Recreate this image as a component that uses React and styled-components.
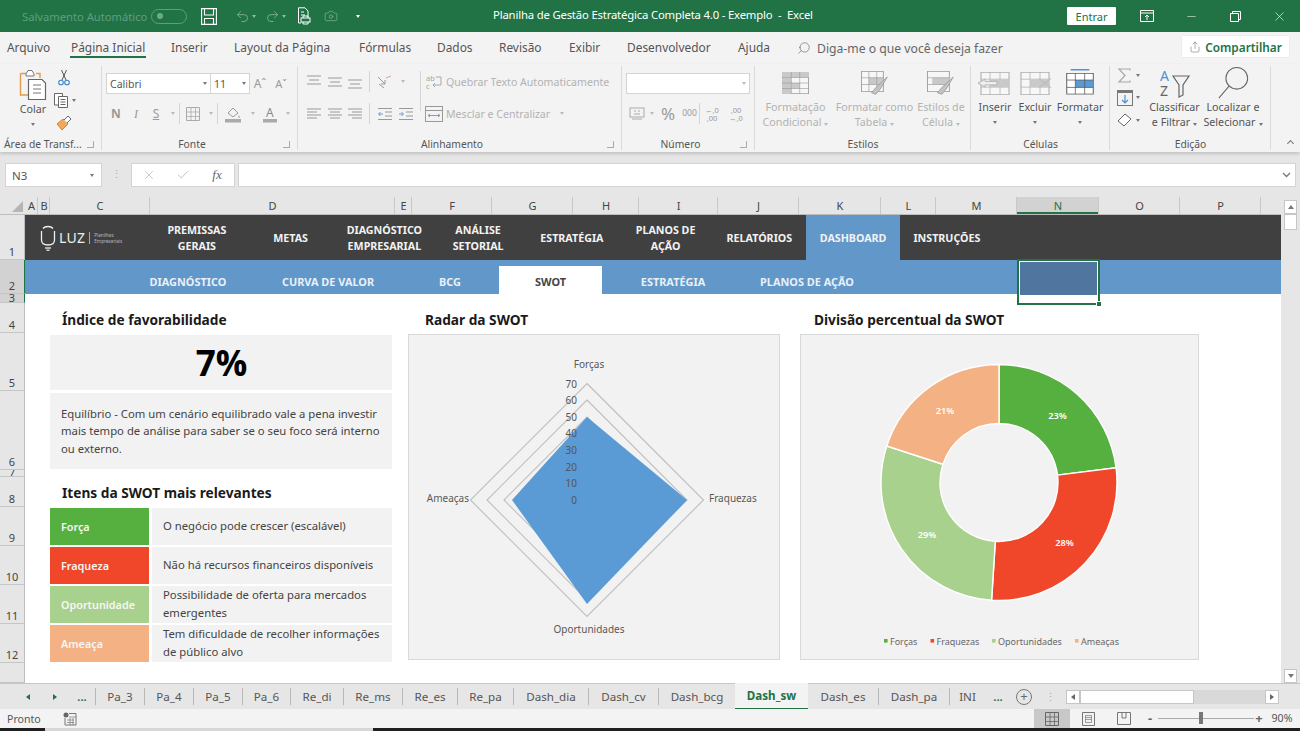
import React from "react";
import styled, { createGlobalStyle } from "styled-components";
import { Undo2, Redo2, Search, X, Minus, Check, Camera, Share } from "lucide-react";

const Global = createGlobalStyle`
  html, body { margin: 0; padding: 0; background: #e6e6e6; }
  * { box-sizing: border-box; }
`;
const UI = `"Noto Sans", "Open Sans", sans-serif`;

const Page = styled.div`
  width: 1300px; height: 731px; overflow: hidden; display: flex; flex-direction: column;
  font-family: ${UI}; color: #444; background: #e6e6e6; position: relative;
`;
/* ---------- title bar ---------- */
const TitleBar = styled.div`
  height: 32px; flex: none; background: #217346; display: flex; align-items: center; color: #fff; font-size: 11.3px;
`;
const AutoSave = styled.span`margin-left: 22px; width: 129px; color: #5f9f7d; font-size: 11.2px; white-space: nowrap;`;
const Toggle = styled.span`
  width: 36px; height: 15px; border: 1px solid #5f9f7d; border-radius: 8px; display: flex; align-items: center; padding-left: 5px;
  &::before { content: ""; width: 6px; height: 6px; border-radius: 50%; background: #6fa98a; }
`;
const QuickSlot = styled.span`
  width: ${p => p.$w}px; flex: none; display: flex; justify-content: center; align-items: center; gap: 2px;
  opacity: ${p => p.$dim ? .5 : 1}; color: #fff;
`;
const DocTitle = styled.span`position: absolute; left: 493px; top: 7px; white-space: pre; letter-spacing: -.015em;`;
const TitleRight = styled.div`margin-left: auto; margin-right: -1px; display: flex; align-items: center;`;
const Entrar = styled.span`
  width: 49px; height: 18px; background: #fff; color: #217346; display: flex; align-items: center; justify-content: center; font-size: 11px; margin-right: 9px; border-radius: 1px;
`;
const WinBtn = styled.span`width: 44px; display: flex; justify-content: center; align-items: center;`;
/* ---------- ribbon tabs ---------- */
const TabBar = styled.div`height: 32px; flex: none; background: #f3f3f3; display: flex; align-items: center; font-size: 11.9px; color: #555; position: relative;`;
const RTab = styled.span`
  width: ${p => p.$w}px; flex: none; height: 32px; line-height: 30px; white-space: nowrap; position: relative;
  ${p => p.$on && `&::after { content: ""; position: absolute; left: -1px; width: 76px; bottom: 6px; height: 2px; background: #217346; }`}
`;
const Tell = styled.span`display: flex; align-items: center; gap: 6px; color: #666; font-size: 12.2px;`;
const Share2 = styled.span`
  position: absolute; right: 11px; top: 4px; width: 107px; height: 21px; background: #fff; color: #217346; font-weight: 600;
  font-size: 11.8px; display: flex; align-items: center; justify-content: center; gap: 4px; box-shadow: 0 0 1px #ccc;
`;
/* ---------- ribbon ---------- */
const Ribbon = styled.div`height: 88px; flex: none; background: #f3f3f3; display: flex; box-shadow: 0 2px 3px #c4c4c4; position: relative; z-index: 1;`;
const Group = styled.div`width: ${p => p.$w}px; flex: none; display: flex; flex-direction: column; position: relative; ${p => p.$end ? "" : "&::after { content: ''; position: absolute; right: 0; top: 2px; bottom: 2px; width: 1px; background: #dadada; }"}`;
const GroupBody = styled.div`flex: 1; min-height: 0; display: flex; padding-left: ${p => p.$pl || 0}px; padding-top: ${p => p.$pt || 0}px;`;
const GroupLabel = styled.div`
  height: 15px; flex: none; font-size: 10.3px; color: #555; text-align: ${p => p.$left ? "left" : "center"}; line-height: 14px; position: relative; white-space: nowrap;
  padding-left: ${p => p.$left ? 4 : 0}px; padding-right: ${p => p.$launcher && !p.$left ? 16 : 0}px;
  ${p => p.$launcher && `&::after { content: ""; position: absolute; right: 8px; top: 4px; width: 6px; height: 6px; border-left: 1px solid #aaa; border-bottom: 1px solid #aaa; transform: scaleX(-1); }`}
`;
const Col = styled.div`display: flex; flex-direction: column; width: ${p => p.$w ? p.$w + "px" : "auto"}; flex: none; align-items: ${p => p.$align || "stretch"};`;
const Row = styled.div`display: flex; align-items: center; height: ${p => p.$h || 21}px; margin-top: ${p => p.$mt || 0}px; flex: none;`;
const Cell = styled.span`
  width: ${p => p.$w}px; flex: none; display: flex; align-items: center; justify-content: center; height: 100%;
  color: ${p => p.$c || "#9a9a9a"}; font-size: ${p => p.$fs || 11}px; font-weight: ${p => p.$fw || 400}; line-height: 1;
  margin-left: ${p => p.$ml || 0}px; padding-right: ${p => p.$pr || 0}px;
  ${p => p.$sep && "border-right: 1px solid #d4d4d4;"}
  ${p => p.$stack && "flex-direction: column; line-height: 8px;"}
`;
const TallSep = styled.span`width: ${p => p.$w}px; height: 40px; align-self: flex-start; flex: none; border-right: 1px solid #d4d4d4;`;
const Sel = styled.span`
  width: ${p => p.$w}px; height: 21px; flex: none; background: #fff; border: 1px solid #d4d4d4; display: flex; align-items: center; justify-content: space-between;
  padding: 0 3px; font-size: 10.5px; color: #555; margin-left: ${p => p.$ml || 0}px;
`;
const Caret = styled.span`width: 0; height: 0; flex: none; border-left: 2.5px solid transparent; border-right: 2.5px solid transparent; border-top: 3px solid ${p => p.$c || "#777"}; display: inline-block; margin-left: ${p => p.$ml || 0}px;`;
const WrapText = styled.span`color: #b2b2b2; font-size: 10.6px; margin-left: 2px; white-space: nowrap;`;
const StackBtn = styled.div`
  width: ${p => p.$w}px; flex: none; display: flex; flex-direction: column; align-items: center; color: ${p => p.$c || "#b2b2b2"}; font-size: 10.7px; line-height: 15px; text-align: center; white-space: nowrap;
`;
const IconBox = styled.div`height: ${p => p.$h || 37}px; flex: none; display: flex; align-items: ${p => p.$a || "center"}; justify-content: center;`;
const Collapse = styled.span`position: absolute; right: 7px; bottom: 6px; width: 5px; height: 5px; border-left: 1.3px solid #777; border-top: 1.3px solid #777; transform: rotate(45deg);`;
/* ---------- formula bar ---------- */
const FormulaRow = styled.div`height: 45px; flex: none; display: flex; align-items: flex-start; padding-top: 11px; padding-left: 5px; background: #e6e6e6;`;
const NameBox = styled.div`width: 97px; height: 24px; background: #fff; border: 1px solid #d4d4d4; display: flex; align-items: center; justify-content: space-between; padding: 0 7px 0 6px; font-size: 11.5px; color: #555;`;
const Dots = styled.div`width: 29px; text-align: center; color: #aaa; font-size: 11px; line-height: 22px; flex: none;`;
const FxBox = styled.div`width: 104px; height: 24px; background: #fff; border: 1px solid #d4d4d4; display: flex; align-items: center; flex: none;`;
const FxCell = styled.span`width: 34.6px; display: flex; justify-content: center; color: #bbb; &:last-child { color: #666; font-family: "Liberation Serif", serif; font-style: italic; font-size: 13px; }`;
const Input = styled.div`width: 1058px; height: 24px; margin-left: 3px; background: #fff; border: 1px solid #d4d4d4; display: flex; align-items: center; justify-content: flex-end; padding-right: 4px; color: #777; font-size: 9px;`;
/* ---------- column headers ---------- */
const ColHeads = styled.div`height: 18px; flex: none; display: flex; background: #e6e6e6; border-bottom: 1px solid #bdbdbd;`;
const Corner = styled.div`width: 25px; flex: none; position: relative; overflow: hidden; &::after { content: ""; position: absolute; right: 2px; bottom: 2px; border-left: 11px solid transparent; border-bottom: 11px solid #b5b5b5; }`;
const ColHead = styled.div`
  width: ${p => p.$w}px; flex: none; text-align: center; font-size: 11px; line-height: 18px; padding-left: 1px; color: ${p => p.$on ? "#217346" : "#444"};
  border-right: 1px solid #c9c9c9; background: ${p => p.$on ? "#d2d2d2" : "transparent"}; ${p => p.$on && "box-shadow: inset 0 -2px 0 #217346;"}
`;
/* ---------- sheet ---------- */
const Work = styled.div`height: 468px; flex: none; display: flex;`;
const RowHeads = styled.div`width: 25px; flex: none; display: flex; flex-direction: column; background: #e6e6e6;`;
const RowHead = styled.div`
  height: ${p => p.$h}px; flex: none; display: flex; justify-content: center; align-items: flex-end; font-size: 11px; line-height: ${p => p.$h < 12 ? p.$h + "px" : "15px"}; overflow: hidden; color: #444;
  border-bottom: 1px solid #c6c6c6; background: ${p => p.$on ? "#d2d2d2" : "transparent"}; border-right: 1px solid ${p => p.$on ? "#217346" : "#bdbdbd"};
`;
const Sheet = styled.div`width: 1256px; flex: none; background: #fff; display: flex; flex-direction: column; position: relative;`;
const MainNav = styled.div`height: 45px; flex: none; background: #404040; display: flex; align-items: stretch;`;
const Logo = styled.div`width: 125px; flex: none; display: flex; align-items: center; padding-left: 15px; color: #eee;`;
const LuzWord = styled.span`font-size: 14px; margin-left: 3px; letter-spacing: .02em;`;
const LuzSub = styled.span`font-size: 4.6px; line-height: 6px; border-left: 1px solid #aaa; margin-left: 4px; padding-left: 4px; color: #bbb;`;
const NavItem = styled.div`
  width: 93.75px; flex: none; display: flex; align-items: center; justify-content: center; text-align: center; color: #f2f2f2;
  font-weight: 700; font-size: 10.7px; line-height: 16px; background: ${p => p.$on ? "#6297c9" : "transparent"};
`;
const SubNav = styled.div`height: 34px; flex: none; background: #6297c9; display: flex; align-items: flex-end; padding-left: 93px;`;
const SubItem = styled.div`
  width: ${p => p.$w}px; height: 28px; flex: none; display: flex; align-items: center; justify-content: center; font-weight: 700; font-size: 10.9px; padding-top: 2px;
  color: ${p => p.$on ? "#444" : "#e9f0f7"}; background: ${p => p.$on ? "#fff" : "transparent"}; margin-left: ${p => p.$ml || 0}px;
`;
const Selection = styled.div`
  position: absolute; left: 992px; top: 44px; width: 83px; height: 46px; border: 2px solid #217346; outline: 0;
  &::before { content: ""; position: absolute; inset: 0; height: 33px; background: #50769f; border: 1px solid #fff; border-bottom: 0; }
`;
const Handle = styled.span`position: absolute; right: -4px; bottom: -4px; width: 6px; height: 6px; background: #217346; border: 1px solid #fff;`;
const Dash = styled.div`flex: 1; display: flex; padding: 9px 0 0 25px;`;
const LeftCol = styled.div`width: 342px; flex: none; display: flex; flex-direction: column;`;
const MidCol = styled.div`width: 372px; margin-left: 16px; flex: none; display: flex; flex-direction: column;`;
const RightCol = styled.div`width: 399px; margin-left: 20px; flex: none; display: flex; flex-direction: column;`;
const Heading = styled.div`
  height: ${p => p.$h}px; flex: none; font-weight: 700; font-size: 13.7px; color: #1a1a1a; padding-left: ${p => p.$pl}px; line-height: 33px; white-space: nowrap; padding-top: ${p => p.$pt || 0}px;
`;
const Big = styled.div`height: 55px; background: #f2f2f2; flex: none; font-size: 35px; font-weight: 700; color: #000; display: flex; align-items: center; justify-content: center; font-family: "Open Sans", sans-serif; padding-left: 1px;`;
const Para = styled.div`height: 76px; margin-top: 3px; background: #f2f2f2; flex: none; padding: 0 8px 0 11px; font-size: 11.3px; line-height: 17.3px; color: #444; display: flex; align-items: center;`;
const SwotList = styled.div`display: flex; flex-direction: column; gap: 2px;`;
const SwotRow = styled.div`display: flex; height: 37px; gap: 3px;`;
const SwotTag = styled.div`width: 99px; flex: none; background: ${p => p.$c}; color: #f6f6f6; font-weight: 600; font-size: 10.8px; display: flex; align-items: center; padding-left: 11px;`;
const SwotDesc = styled.div`flex: 1; background: #f2f2f2; font-size: 11.3px; line-height: 17.3px; color: #444; display: flex; align-items: center; padding: 0 0 2px 11px;`;
const ChartBox = styled.div`height: 326px; flex: none; background: #f2f2f2; border: 1px solid #d9d9d9; position: relative; overflow: hidden;`;
const ChartSvg = styled.svg`display: block; width: 100%; height: 100%; font-family: ${UI};`;
const VScroll = styled.div`width: 19px; flex: none; margin-top: -17px; background: #e6e6e6; display: flex; flex-direction: column; align-items: center; position: relative; z-index: 1;`;
const VBtn = styled.div`width: 13px; height: 14px; background: #fff; border: 1px solid #c6c6c6; display: flex; align-items: center; justify-content: center; flex: none; margin-top: ${p => p.$top ? 2 : 0}px;`;
const VThumb = styled.div`width: 13px; height: 16px; background: #fff; border: 1px solid #c6c6c6; flex: none;`;
const Tri = styled.span`width: 0; height: 0; border-left: 3px solid transparent; border-right: 3px solid transparent; ${p => p.$up ? "border-bottom: 4px solid #777;" : "border-top: 4px solid #777;"}`;
const VGap = styled.div`flex: 1;`;
/* ---------- sheet tabs ---------- */
const TabsRow = styled.div`height: 26px; flex: none; display: flex; align-items: stretch; background: #e6e6e6; border-top: 1px solid #c6c6c6; font-size: 11.6px; color: #555;`;
const TabNav = styled.div`width: 95px; flex: none; display: flex; align-items: center; padding-left: 14px; color: #217346;`;
const NavCell = styled.span`width: ${p => p.$w}px; flex: none; display: flex; justify-content: center; font-size: 11px; font-weight: 700; align-self: center; color: #217346;`;
const SheetTab = styled.div`
  width: ${p => p.$w}px; flex: none; display: flex; align-items: center; justify-content: center; white-space: nowrap;
  border-left: ${p => p.$on ? "0" : "1px solid #b8b8b8"}; margin: ${p => p.$on ? "-1px 0 1px" : "4px 0 4px"};
  ${p => p.$on && "background: #f3f3f3; color: #217346; font-weight: 700; border-bottom: 2px solid #217346; height: 27px;"}
  ${p => p.$noLine && "border-left: 0;"}
`;
const AddBtn = styled.span`width: 16px; height: 16px; border: 1px solid #777; border-radius: 50%; display: flex; align-items: center; justify-content: center; color: #666; font-size: 13px; line-height: 1;`;
const HScroll = styled.div`width: 213px; height: 14px; margin-left: 3px; display: flex; background: #d9d9d9; align-self: center;`;
const HBtn = styled.div`width: 14px; flex: none; background: #fff; border: 1px solid #c6c6c6; display: flex; align-items: center; justify-content: center;`;
const HThumb = styled.div`width: 114px; flex: none; background: #fff; border: 1px solid #c6c6c6;`;
const HTri = styled.span`width: 0; height: 0; border-top: 3px solid transparent; border-bottom: 3px solid transparent; ${p => p.$l ? `border-right: 4px solid ${p.$c || "#666"};` : `border-left: 4px solid ${p.$c || "#666"};`}`;
/* ---------- status ---------- */
const Status = styled.div`height: 19px; flex: none; display: flex; align-items: center; background: #f3f3f3; font-size: 10.6px; color: #555; padding-left: 7px;`;
const StatusIcon = styled.svg`margin-left: 22px;`;
const StatusRight = styled.div`margin-left: auto; display: flex; align-items: center; height: 100%;`;
const ViewBtn = styled.span`width: 36px; height: 100%; display: flex; align-items: center; justify-content: center; background: ${p => p.$on ? "#c8c8c8" : "transparent"};`;
const Slider = styled.div`width: 96px; height: 1px; background: #aaa; position: relative;`;
const SliderThumb = styled.span`position: absolute; left: 41px; top: -6px; width: 4px; height: 12px; background: #777;`;
const Strip = styled.div`height: 3px; flex: none; display: flex; background: #1f1f1f;`;
const StripLight = styled.div`width: 328px; margin-left: 45px; background: #d8d8d8;`;
const Flip = styled.span`display: flex; transform: scaleX(-1);`;

/* ---------- icon drawings ---------- */
const TableIco = ({ w = 27, h = 22, fill = [], accent = "#c9c9c9", stroke = "#999" }) => (
  <svg width={w} height={h} viewBox="0 0 32 32" preserveAspectRatio="none">
    <rect x=".5" y=".5" width="31" height="31" fill="#f7f7f7" stroke={stroke} />
    {fill.map((f, i) => <rect key={i} x={f[0]} y={f[1]} width={f[2]} height={f[3]} fill={accent} />)}
    {[8, 16, 24].map(v => <path key={v} d={`M0 ${v}H32`} stroke={stroke} strokeWidth=".8" />)}
    {[11, 21].map(v => <path key={v} d={`M${v} 0V32`} stroke={stroke} strokeWidth=".8" />)}
  </svg>
);
const Brush = () => <path d="M30 8 L22 24 L17 31 L12 29 L17 22 Z" fill="#c4c4c4" stroke="#999" strokeWidth="1" />;
const AlignIco = ({ rows, color = "#999" }) => (
  <svg width="16" height="14" viewBox="0 0 16 14" stroke={color} strokeWidth="1">
    {rows.map((r, i) => <path key={i} d={`M${r[0]} ${r[2]}H${r[1]}`} />)}
  </svg>
);
const Paste = () => (
  <svg width="30" height="34" viewBox="0 0 30 34">
    <path d="M2.5 5.5H8M18 5.5H22V10M2.5 5.5V27H10" fill="none" stroke="#e29a4c" strokeWidth="1.4" />
    <path d="M8 6L10 2.5H14L16 6V8H8Z" fill="#fff" stroke="#777" strokeWidth="1" />
    <path d="M10.5 11.5H24L27.5 15V31.5H10.5Z" fill="#fff" stroke="#666" strokeWidth="1.2" />
    <path d="M15 17H23M15 21H23M15 25H23" stroke="#777" />
  </svg>
);
const CutIco = () => (
  <svg width="12" height="17" viewBox="0 0 12 17" fill="none">
    <path d="M3.5 1L8 11M8.5 1L4 11" stroke="#555" strokeWidth="1" />
    <circle cx="3" cy="13.5" r="2.3" stroke="#3f86c8" strokeWidth="1.1" />
    <circle cx="9" cy="13.5" r="2.3" stroke="#3f86c8" strokeWidth="1.1" />
  </svg>
);
const CopyIco = () => (
  <svg width="16" height="17" viewBox="0 0 16 17" fill="#fff" stroke="#666">
    <path d="M1.5 1.5H9.5V13H1.5Z" /><path d="M5.5 4.5H14.5V15.5H5.5Z" /><path d="M7.5 7.5H12.5M7.5 10H12.5M7.5 12.5H12.5" />
  </svg>
);
const FormatPainter = () => (
  <svg width="16" height="17" viewBox="0 0 16 17">
    <path d="M1 10L7 5L12 10L6 16Z" fill="#f0a95c" stroke="#d08838" />
    <path d="M8 6L12 2L15 5L11 9" fill="#fff" stroke="#666" />
  </svg>
);
const Bulb = () => (
  <svg width="16" height="26" viewBox="0 0 16 26" fill="none" stroke="#eee" strokeWidth="1.3">
    <path d="M3 3.5C5 .8 11 .8 13 3.5" /><path d="M1.5 6V15C1.5 18.5 4 20 8 20S14.5 18.5 14.5 15V6" />
    <path d="M5 23H11" /><path d="M6.5 25.2H9.5" />
  </svg>
);
const QSave = () => (
  <svg width="16" height="17" viewBox="0 0 16 17" fill="none" stroke="#fff" strokeWidth="1.1">
    <path d="M.6.6H15.4V16.4H.6Z" /><path d="M3.5.6V7H12.5V.6" /><path d="M3.5 16.4V10.5H12.5V16.4" />
  </svg>
);
const QDoc = () => (
  <svg width="14" height="18" viewBox="0 0 14 18" fill="none" stroke="#fff" strokeWidth="1">
    <path d="M1.5.8H8L11 4V10" /><path d="M1.5.8V16H4" /><path d="M4 8H8M4 5H7" /><rect x="4" y="11" width="9" height="4" /><path d="M6 11V9H11V11M6 15V17H11V15" />
  </svg>
);
const TinyTable = ({ w = 14, color = "#aaa" }) => (
  <svg width={w} height={w} viewBox="0 0 14 14" fill="none" stroke={color}>
    <path d="M.5.5H13.5V13.5H.5Z" /><path d="M.5 5H13.5M.5 9.5H13.5M5 .5V13.5M9.5 .5V13.5" strokeWidth=".8" />
  </svg>
);
const WrapAb = () => <svg width="18" height="18" viewBox="0 0 18 18" fontFamily="Noto Sans" fontSize="7.5" fill="#a8a8a8"><text x="1" y="7.5">ab</text><text x="1" y="16">c</text><path d="M11 4H16V12H8M10 10L8 12L10 14" fill="none" stroke="#a8a8a8" /></svg>;
const MergeIco = () => <svg width="18" height="16" viewBox="0 0 18 16" fill="none" stroke="#999"><rect x=".5" y=".5" width="17" height="15" /><path d="M.5 4.5H17.5M3 9.5H15M5 8L3 9.5L5 11M13 8L15 9.5L13 11" /></svg>;
const Orient = () => <svg width="16" height="16" viewBox="0 0 16 16" fill="none" stroke="#999"><path d="M2 3L9 10M9 10V6M9 10H5" /><path d="M10 4L15 2" stroke="#c77" strokeWidth=".7" /><path d="M3 10L8 14" /></svg>;
const IndentIco = ({ right }) => (
  <svg width="16" height="14" viewBox="0 0 16 14" fill="none" stroke="#999">
    <path d="M1 1.5H15M1 12.5H15M8 5H15M8 9H15" />
    <path d={right ? "M1 7H5M3.5 5L5.5 7L3.5 9" : "M6 7H2M3.5 5L1.5 7L3.5 9"} stroke="#6d9ccb" />
  </svg>
);
const CurrencyIco = () => <svg width="16" height="16" viewBox="0 0 16 16" fill="none" stroke="#aaa"><rect x="1" y="2" width="14" height="9" /><path d="M3 13H13M5 5H7M9 5H11M5 8H11" /></svg>;
const PaintBucket = () => <svg width="18" height="18" viewBox="0 0 18 18"><path d="M4 8L9 3L14 8L9 12Z" fill="none" stroke="#999" /><path d="M15 10C16 12 16 13 15 13S14 12 15 10Z" fill="#aaa" /><rect x="1" y="14" width="16" height="3.5" fill="#aaa" /></svg>;
const FontColor = () => <svg width="16" height="18" viewBox="0 0 16 18" fontFamily="Noto Sans" fontSize="12" fill="#8a8a8a"><text x="4" y="12">A</text><rect x="1" y="14" width="14" height="3.5" fill="#aaa" /></svg>;
const Sigma = () => <svg width="15" height="15" viewBox="0 0 15 15" fill="none" stroke="#a8a8a8" strokeWidth="1.2"><path d="M13 2.5V1H2L8 7.5L2 14H13V12.5" /></svg>;
const FillDown = () => <svg width="16" height="16" viewBox="0 0 16 16" fill="none"><rect x=".5" y=".5" width="15" height="15" stroke="#777" /><rect x="0" y="0" width="16" height="3" fill="#777" /><path d="M8 5V13M5 10L8 13L11 10" stroke="#4d92d4" strokeWidth="1.2" /></svg>;
const Eraser = () => <svg width="15" height="15" viewBox="0 0 15 15" fill="#fff" stroke="#666"><path d="M1 8L8 1L14 6L7 13Z" /></svg>;
const SortFilter = () => (
  <svg width="40" height="36" viewBox="0 0 40 36" fontFamily="Noto Sans" fontSize="14">
    <text x="5" y="16" fill="#4d92d4">A</text><text x="5" y="31" fill="#666">Z</text>
    <path d="M18 11H34L28 20V30L24 32V20Z" fill="none" stroke="#666" strokeWidth="1.2" />
  </svg>
);
const Magnifier = () => (
  <svg width="34" height="34" viewBox="0 0 34 36" fill="none" stroke="#666" strokeWidth="1.1">
    <circle cx="21" cy="13" r="11.5" /><path d="M13 21L2 34" />
  </svg>
);
const FormatCells = () => (
  <svg width="28" height="28" viewBox="0 0 30 38" preserveAspectRatio="none">
    <path d="M5 1H25" stroke="#4d92d4" strokeWidth="2" />
    <rect x=".8" y="6" width="28.4" height="28" fill="#fff" stroke="#555" />
    <rect x="10" y="15" width="19" height="10" fill="#5b9bd5" />
    <path d="M1 15H29M1 25H29M10 6V34M20 6V34" stroke="#555" strokeWidth=".9" />
  </svg>
);
const InsertCells = ({ del }) => (
  <svg width="36" height="23" viewBox="0 0 36 32" preserveAspectRatio="none">
    <rect x="4" y=".5" width="28" height="31" fill="#f7f7f7" stroke="#aaa" />
    <path d="M4 10H32M4 21H32M13 0V32M23 0V32" stroke="#aaa" strokeWidth=".8" />
    <rect x="13" y="10" width="19" height="11" fill="#c9c9c9" />
    {del
      ? <path d="M22 9L34 22M34 9L22 22" stroke="#bbb" strokeWidth="1.2" fill="none" />
      : <path d="M1 15.5L8 10V13H20V18H8V21Z" fill="#eee" stroke="#aaa" />}
  </svg>
);

/* ---------- charts ---------- */
const RADAR = { cx: 178, cy: 165, r: 116.5 };
const diamond = (t, r, b, l) => {
  const { cx, cy } = RADAR;
  return `${cx},${cy - t} ${cx + r},${cy} ${cx},${cy + b} ${cx - l},${cy}`;
};
const RadarChart = () => (
  <ChartSvg viewBox="0 0 370 324">
    <polygon points={diamond(116.5, 116.5, 116.5, 116.5)} fill="none" stroke="#bfbfbf" strokeWidth="1.1" />
    <polygon points={diamond(100, 100, 100, 100)} fill="none" stroke="#bfbfbf" strokeWidth="1.1" />
    <polygon points={diamond(83, 83, 83, 83)} fill="none" stroke="#bfbfbf" strokeWidth="1.1" />
    <polygon points={diamond(83, 100, 104, 75)} fill="#5b9bd5" />
    <g fontSize="10" fill="#555" textAnchor="end">
      {[70, 60, 50, 40, 30, 20, 10, 0].map((v, i) => <text key={v} x="168" y={52.5 + i * 16.6}>{v}</text>)}
    </g>
    <g fontSize="10" fill="#595959">
      <text x="180" y="33" textAnchor="middle">Forças</text>
      <text x="300" y="167">Fraquezas</text>
      <text x="180" y="298" textAnchor="middle">Oportunidades</text>
      <text x="60" y="167" textAnchor="end">Ameaças</text>
    </g>
  </ChartSvg>
);
const polar = (cx, cy, r, deg) => {
  const a = (deg - 90) * Math.PI / 180;
  return [cx + r * Math.cos(a), cy + r * Math.sin(a)];
};
const arc = (cx, cy, R, r, a0, a1) => {
  const [x0, y0] = polar(cx, cy, R, a0), [x1, y1] = polar(cx, cy, R, a1);
  const [x2, y2] = polar(cx, cy, r, a1), [x3, y3] = polar(cx, cy, r, a0);
  const large = a1 - a0 > 180 ? 1 : 0;
  return `M${x0} ${y0}A${R} ${R} 0 ${large} 1 ${x1} ${y1}L${x2} ${y2}A${r} ${r} 0 ${large} 0 ${x3} ${y3}Z`;
};
const SEG = [
  { a: [0, 82.8], c: "#56b040", t: "23%", x: 256.5, y: 81 },
  { a: [82.8, 183.6], c: "#f0472b", t: "28%", x: 263.5, y: 208 },
  { a: [183.6, 288], c: "#a9d18e", t: "29%", x: 126, y: 200 },
  { a: [288, 360], c: "#f4b183", t: "21%", x: 144, y: 76 },
];
const LEG = [
  { x: 84, c: "#56b040", t: "Forças" }, { x: 130.5, c: "#f0472b", t: "Fraquezas" },
  { x: 192, c: "#a9d18e", t: "Oportunidades" }, { x: 275, c: "#f4b183", t: "Ameaças" },
];
const DonutChart = () => (
  <ChartSvg viewBox="0 0 397 324">
    {SEG.map(s => <path key={s.t} d={arc(198, 147.5, 118, 59, s.a[0], s.a[1])} fill={s.c} stroke="#fff" strokeWidth="1.4" />)}
    {SEG.map(s => <text key={s.t} x={s.x} y={s.y} fontSize="9.2" fontWeight="600" fill="#fff" textAnchor="middle" dominantBaseline="middle">{s.t}</text>)}
    {LEG.map(l => (
      <g key={l.t}>
        <rect x={l.x - 1} y="304" width="3.6" height="3.6" fill={l.c} />
        <text x={l.x + 5} y="310" fontSize="9" fill="#666">{l.t}</text>
      </g>
    ))}
  </ChartSvg>
);

/* ---------- data ---------- */
const COLS = [["A", 13], ["B", 12], ["C", 100], ["D", 245], ["E", 17], ["F", 80], ["G", 81], ["H", 66], ["I", 79], ["J", 81], ["K", 82], ["L", 55], ["M", 81], ["N", 82], ["O", 81], ["P", 81]];
const ROWS = [["1", 45], ["2", 34, 1], ["3", 9, 1], ["4", 30], ["5", 58], ["6", 79], ["7", 7], ["8", 30], ["9", 39], ["10", 39], ["11", 39], ["12", 39], ["", 20]];
const TABS = [["Pa_3", 49], ["Pa_4", 49], ["Pa_5", 49], ["Pa_6", 48], ["Re_di", 53], ["Re_ms", 59], ["Re_es", 55], ["Re_pa", 56], ["Dash_dia", 75], ["Dash_cv", 70], ["Dash_bcg", 77], ["Dash_sw", 73, 1], ["Dash_es", 70], ["Dash_pa", 71], ["INI", 36]];
const RIBBON_TABS = [["Arquivo", 64], ["Página Inicial", 100, 1], ["Inserir", 63], ["Layout da Página", 125], ["Fórmulas", 78], ["Dados", 62], ["Revisão", 70], ["Exibir", 58], ["Desenvolvedor", 111], ["Ajuda", 59]];
const SWOT = [
  ["Força", "#56b040", "O negócio pode crescer (escalável)"],
  ["Fraqueza", "#f0472b", "Não há recursos financeiros disponíveis"],
  ["Oportunidade", "#a9d18e", "Possibilidade de oferta para mercados emergentes"],
  ["Ameaça", "#f4b183", "Tem dificuldade de recolher informações de público alvo"],
];

export default function App() {
  return (
    <Page>
      <Global />
      <TitleBar>
        <AutoSave>Salvamento Automático</AutoSave>
        <Toggle />
        <QuickSlot $w={43}><QSave /></QuickSlot>
        <QuickSlot $w={30} $dim><Undo2 size={15} strokeWidth={1.2} /><Caret $c="#fff" /></QuickSlot>
        <QuickSlot $w={30} $dim><Redo2 size={15} strokeWidth={1.2} /><Caret $c="#fff" /></QuickSlot>
        <QuickSlot $w={28}><QDoc /></QuickSlot>
        <QuickSlot $w={26} $dim><Camera size={14} strokeWidth={1.1} /></QuickSlot>
        <QuickSlot $w={28}><Caret $c="#fff" /></QuickSlot>
        <DocTitle>Planilha de Gestão Estratégica Completa 4.0 - Exemplo  -  Excel</DocTitle>
        <TitleRight>
          <Entrar>Entrar</Entrar>
          <WinBtn><svg width="14" height="12" viewBox="0 0 14 12" fill="none" stroke="#fff"><path d="M.5.5H13.5V11.5H.5ZM.5 3H13.5M7 10V5M5 7L7 5L9 7" /></svg></WinBtn>
          <WinBtn><Minus size={13} strokeWidth={1} /></WinBtn>
          <WinBtn><svg width="11" height="11" viewBox="0 0 11 11" fill="none" stroke="#fff"><path d="M.5 2.5H8.5V10.5H.5ZM2.5 2.5V.5H10.5V8.5H8.5" /></svg></WinBtn>
          <WinBtn><X size={15} strokeWidth={1} /></WinBtn>
        </TitleRight>
      </TitleBar>

      <TabBar>
        <RTab $w={7} />
        {RIBBON_TABS.map(t => <RTab key={t[0]} $w={t[1]} $on={t[2]}>{t[0]}</RTab>)}
        <Tell><Flip><Search size={14} strokeWidth={1.1} /></Flip>Diga-me o que você deseja fazer</Tell>
        <Share2><Share size={12} strokeWidth={1.2} color="#777" />Compartilhar</Share2>
      </TabBar>

      <Ribbon>
        <Group $w={102}>
          <GroupBody $pl={18} $pt={3}>
            <StackBtn $w={30} $c="#555"><IconBox $h={35}><Paste /></IconBox>Colar<IconBox $h={14}><Caret /></IconBox></StackBtn>
            <Col $w={32} $align="center">
              <IconBox $h={21}><CutIco /></IconBox>
              <IconBox $h={24}><CopyIco /><Caret $ml={3} /></IconBox>
              <IconBox $h={21}><FormatPainter /></IconBox>
            </Col>
          </GroupBody>
          <GroupLabel $launcher $left>Área de Transf...</GroupLabel>
        </Group>

        <Group $w={196}>
          <GroupBody $pl={4} $pt={9}>
            <Col>
              <Row>
                <Sel $w={105}>Calibri<Caret /></Sel>
                <Sel $w={40} $ml={-1}>11<Caret /></Sel>
                <Cell $w={20} $fs={12}>Aˆ</Cell><Cell $w={22} $fs={11}>Aˇ</Cell>
              </Row>
              <Row $mt={9}>
                <Cell $w={20} $fs={12} $fw={700}>N</Cell>
                <Cell $w={20} $fs={12} style={{ fontStyle: "italic", fontFamily: "Liberation Serif" }}>I</Cell>
                <Cell $w={20} $fs={12} style={{ textDecoration: "underline" }}>S</Cell>
                <Cell $w={14} $sep><Caret $c="#bbb" /></Cell>
                <Cell $w={25}><TinyTable /></Cell>
                <Cell $w={13} $sep><Caret $c="#bbb" /></Cell>
                <Cell $w={30}><PaintBucket /></Cell>
                <Cell $w={9}><Caret $c="#bbb" /></Cell>
                <Cell $w={26}><FontColor /></Cell>
                <Cell $w={10}><Caret $c="#bbb" /></Cell>
              </Row>
            </Col>
          </GroupBody>
          <GroupLabel $launcher>Fonte</GroupLabel>
        </Group>

        <Group $w={324}>
          <GroupBody $pl={6} $pt={7}>
            <Col>
              <Row>
                <Cell $w={20}><AlignIco rows={[[1, 15, 1], [3, 13, 5], [1, 15, 9]]} /></Cell>
                <Cell $w={21}><AlignIco rows={[[1, 15, 3], [3, 13, 7], [1, 15, 11]]} /></Cell>
                <Cell $w={25} $pr={4} $sep><AlignIco rows={[[1, 15, 5], [3, 13, 9], [1, 15, 13]]} /></Cell>
                <Cell $w={28}><Orient /></Cell>
                <Cell $w={10}><Caret $c="#bbb" /></Cell>
                <TallSep $w={13} />
                <Cell $w={21} $ml={2}><WrapAb /></Cell>
                <WrapText>Quebrar Texto Automaticamente</WrapText>
              </Row>
              <Row $mt={11}>
                <Cell $w={20}><AlignIco rows={[[1, 15, 2], [1, 11, 5], [1, 15, 8], [1, 11, 11]]} /></Cell>
                <Cell $w={21}><AlignIco rows={[[1, 15, 2], [3, 13, 5], [1, 15, 8], [3, 13, 11]]} /></Cell>
                <Cell $w={25} $pr={4} $sep><AlignIco rows={[[1, 15, 2], [5, 15, 5], [1, 15, 8], [5, 15, 11]]} /></Cell>
                <Cell $w={21} $ml={4}><IndentIco /></Cell>
                <Cell $w={21}><IndentIco right /></Cell>
                <Cell $w={5} />
                <Cell $w={21} $ml={2}><MergeIco /></Cell>
                <WrapText>Mesclar e Centralizar</WrapText>
                <Caret $c="#bbb" $ml={10} />
              </Row>
            </Col>
          </GroupBody>
          <GroupLabel $launcher>Alinhamento</GroupLabel>
        </Group>

        <Group $w={133}>
          <GroupBody $pl={4} $pt={9}>
            <Col>
              <Sel $w={124}><span /><Caret $c="#bbb" /></Sel>
              <Row $mt={9}>
                <Cell $w={22}><CurrencyIco /></Cell>
                <Cell $w={8}><Caret $c="#bbb" /></Cell>
                <Cell $w={24} $fs={17}>%</Cell>
                <Cell $w={20} $fs={8.5} $sep>000</Cell>
                <Cell $w={24} $fs={7.5} $stack><span>←,0</span><span>,00</span></Cell>
                <Cell $w={24} $fs={7.5} $stack><span>,00</span><span>→,0</span></Cell>
              </Row>
            </Col>
          </GroupBody>
          <GroupLabel $launcher>Número</GroupLabel>
        </Group>

        <Group $w={216}>
          <GroupBody $pl={1} $pt={2}>
            <StackBtn $w={79}>
              <IconBox $h={34}><TableIco fill={[[0, 0, 32, 8], [0, 8, 11, 24], [11, 16, 10, 8]]} /></IconBox>
              Formatação<span>Condicional<Caret $c="#bbb" $ml={3} /></span>
            </StackBtn>
            <StackBtn $w={79}>
              <IconBox $h={34}>
                <svg width="28" height="24" viewBox="0 0 32 32" preserveAspectRatio="none"><rect x=".5" y=".5" width="25" height="27" fill="#f7f7f7" stroke="#999" /><rect x="9" y="9" width="16" height="9" fill="#c9c9c9" /><path d="M0 9H26M0 18H26M9 0V28M18 0V28" stroke="#999" strokeWidth=".8" /><Brush /></svg>
              </IconBox>
              Formatar como<span>Tabela<Caret $c="#bbb" $ml={3} /></span>
            </StackBtn>
            <StackBtn $w={54}>
              <IconBox $h={34}>
                <svg width="28" height="24" viewBox="0 0 32 32" preserveAspectRatio="none"><rect x=".5" y=".5" width="25" height="27" fill="#f7f7f7" stroke="#999" /><rect x="6" y="9" width="20" height="9" fill="#c9c9c9" /><path d="M0 9H26M0 18H26" stroke="#999" strokeWidth=".8" /><Brush /></svg>
              </IconBox>
              Estilos de<span>Célula<Caret $c="#bbb" $ml={3} /></span>
            </StackBtn>
          </GroupBody>
          <GroupLabel>Estilos</GroupLabel>
        </Group>

        <Group $w={139}>
          <GroupBody $pl={4} $pt={2}>
            <StackBtn $w={40} $c="#555"><IconBox $h={34}><InsertCells /></IconBox>Inserir<IconBox $h={15}><Caret /></IconBox></StackBtn>
            <StackBtn $w={40} $c="#555"><IconBox $h={34}><InsertCells del /></IconBox>Excluir<IconBox $h={15}><Caret /></IconBox></StackBtn>
            <StackBtn $w={50} $c="#555"><IconBox $h={34}><FormatCells /></IconBox>Formatar<IconBox $h={15}><Caret /></IconBox></StackBtn>
          </GroupBody>
          <GroupLabel>Células</GroupLabel>
        </Group>

        <Group $w={161}>
          <GroupBody $pl={7} $pt={1}>
            <Col $w={30} $align="flex-start">
              <IconBox $h={21}><Sigma /><Caret $ml={4} /></IconBox>
              <IconBox $h={23}><FillDown /><Caret $ml={3} /></IconBox>
              <IconBox $h={23}><Eraser /><Caret $ml={4} /></IconBox>
            </Col>
            <StackBtn $w={55} $c="#555">
              <IconBox $h={35}><SortFilter /></IconBox>Classificar<span>e Filtrar<Caret $ml={3} /></span>
            </StackBtn>
            <StackBtn $w={62} $c="#555">
              <IconBox $h={35}><Magnifier /></IconBox>Localizar e<span>Selecionar<Caret $ml={3} /></span>
            </StackBtn>
          </GroupBody>
          <GroupLabel>Edição</GroupLabel>
        </Group>
        <Collapse />
      </Ribbon>

      <FormulaRow>
        <NameBox>N3<Caret /></NameBox>
        <Dots>⋮</Dots>
        <FxBox>
          <FxCell><X size={14} strokeWidth={1.4} /></FxCell>
          <FxCell><Check size={14} strokeWidth={1.6} /></FxCell>
          <FxCell>fx</FxCell>
        </FxBox>
        <Input><svg width="9" height="6" viewBox="0 0 9 6" fill="none" stroke="#777" strokeWidth="1.3"><path d="M1 1L4.5 4.5L8 1" /></svg></Input>
      </FormulaRow>

      <ColHeads>
        <Corner />
        {COLS.map(c => <ColHead key={c[0]} $w={c[1]} $on={c[0] === "N"}>{c[0]}</ColHead>)}
      </ColHeads>

      <Work>
        <RowHeads>
          {ROWS.map((r, i) => <RowHead key={i} $h={r[1]} $on={r[2]}>{r[0]}</RowHead>)}
        </RowHeads>
        <Sheet>
          <MainNav>
            <Logo><Bulb /><LuzWord>LUZ</LuzWord><LuzSub>Planilhas<br />Empresariais</LuzSub></Logo>
            <NavItem>PREMISSAS<br />GERAIS</NavItem>
            <NavItem>METAS</NavItem>
            <NavItem>DIAGNÓSTICO<br />EMPRESARIAL</NavItem>
            <NavItem>ANÁLISE<br />SETORIAL</NavItem>
            <NavItem>ESTRATÉGIA</NavItem>
            <NavItem>PLANOS DE<br />AÇÃO</NavItem>
            <NavItem>RELATÓRIOS</NavItem>
            <NavItem $on>DASHBOARD</NavItem>
            <NavItem>INSTRUÇÕES</NavItem>
          </MainNav>
          <SubNav>
            <SubItem $w={140}>DIAGNÓSTICO</SubItem>
            <SubItem $w={140}>CURVA DE VALOR</SubItem>
            <SubItem $w={98} $ml={3}>BCG</SubItem>
            <SubItem $w={103} $on>SWOT</SubItem>
            <SubItem $w={142}>ESTRATÉGIA</SubItem>
            <SubItem $w={126}>PLANOS DE AÇÃO</SubItem>
          </SubNav>
          <Selection><Handle /></Selection>
          <Dash>
            <LeftCol>
              <Heading $h={32} $pl={12}>Índice de favorabilidade</Heading>
              <Big>7%</Big>
              <Para>Equilíbrio - Com um cenário equilibrado vale a pena investir mais tempo de análise para saber se o seu foco será interno ou externo.</Para>
              <Heading $h={39} $pl={12} $pt={7}>Itens da SWOT mais relevantes</Heading>
              <SwotList>
                {SWOT.map(s => (
                  <SwotRow key={s[0]}>
                    <SwotTag $c={s[1]}>{s[0]}</SwotTag>
                    <SwotDesc>{s[2]}</SwotDesc>
                  </SwotRow>
                ))}
              </SwotList>
            </LeftCol>
            <MidCol>
              <Heading $h={31} $pl={17}>Radar da SWOT</Heading>
              <ChartBox><RadarChart /></ChartBox>
            </MidCol>
            <RightCol>
              <Heading $h={31} $pl={14}>Divisão percentual da SWOT</Heading>
              <ChartBox><DonutChart /></ChartBox>
            </RightCol>
          </Dash>
        </Sheet>
        <VScroll>
          <VBtn $top><Tri $up /></VBtn>
          <VThumb />
          <VGap />
          <VBtn><Tri /></VBtn>
        </VScroll>
      </Work>

      <TabsRow>
        <TabNav>
          <NavCell $w={27}><HTri $l $c="#217346" /></NavCell>
          <NavCell $w={28}><HTri $c="#217346" /></NavCell>
          <NavCell $w={26}>...</NavCell>
        </TabNav>
        {TABS.map((t, i) => <SheetTab key={t[0]} $w={t[1]} $on={t[2]} $noLine={i === 11 || i === 12}>{t[0]}</SheetTab>)}
        <NavCell $w={26}>...</NavCell>
        <Cell $w={26}><AddBtn>+</AddBtn></Cell>
        <Cell $w={26} $c="#aaa">⋮</Cell>
        <HScroll>
          <HBtn><HTri $l /></HBtn>
          <HThumb />
          <VGap />
          <HBtn><HTri /></HBtn>
        </HScroll>
      </TabsRow>

      <Status>
        Pronto
        <StatusIcon width="14" height="14" viewBox="0 0 14 14" fill="none" stroke="#777"><circle cx="3" cy="3" r="2.5" fill="#666" stroke="none" /><path d="M6 1.5H13V13H2V6" /><path d="M4 8H11M4 10.5H11M6 5H13M7 6V13M10 6V13" strokeWidth=".7" /></StatusIcon>
        <StatusRight>
          <ViewBtn $on><TinyTable w={14} color="#666" /></ViewBtn>
          <ViewBtn><svg width="13" height="14" viewBox="0 0 13 14" fill="none" stroke="#777"><path d="M.5.5H12.5V13.5H.5Z" /><path d="M3.5 3.5H9.5V10.5H3.5ZM3.5 5.5H9.5M3.5 7.5H9.5" strokeWidth=".7" /></svg></ViewBtn>
          <ViewBtn><svg width="14" height="13" viewBox="0 0 14 13" fill="none" stroke="#777"><path d="M.5.5H13.5V12.5H.5Z" /><path d="M5 .5V6H9V.5" /></svg></ViewBtn>
          <Cell $w={16} $c="#666" $fs={13} $fw={700}>-</Cell>
          <Slider><SliderThumb /></Slider>
          <Cell $w={10} $c="#666" $fs={13} $fw={700}>+</Cell>
          <Cell $w={36} $c="#555" $fs={10.6}>90%</Cell>
        </StatusRight>
      </Status>
      <Strip><StripLight /></Strip>
    </Page>
  );
}
